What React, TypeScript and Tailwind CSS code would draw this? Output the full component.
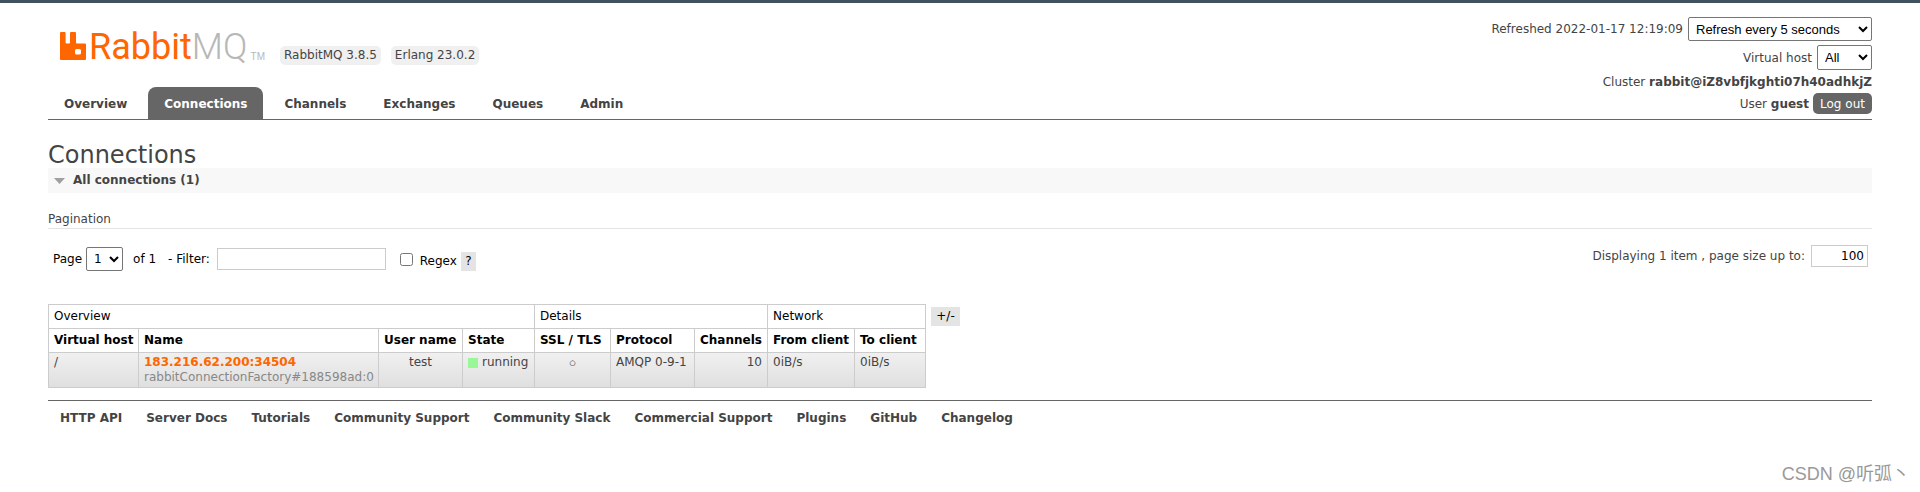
import React, { useState } from 'react';

const tabs = ['Overview', 'Connections', 'Channels', 'Exchanges', 'Queues', 'Admin'];

const footerLinks = [
  'HTTP API',
  'Server Docs',
  'Tutorials',
  'Community Support',
  'Community Slack',
  'Commercial Support',
  'Plugins',
  'GitHub',
  'Changelog',
];

const connections = [
  {
    vhost: '/',
    name: '183.216.62.200:34504',
    client: 'rabbitConnectionFactory#188598ad:0',
    user: 'test',
    state: 'running',
    tls: '○',
    protocol: 'AMQP 0-9-1',
    channels: 10,
    fromClient: '0iB/s',
    toClient: '0iB/s',
  },
];

const cell = 'border border-[#ccc] px-[5px]';

const Logo = () => (
  <a href="#/" aria-label="RabbitMQ" className="flex w-[205px] items-start pt-3">
    <svg width="26" height="28" viewBox="0 0 26 28" fill="#ff6600" className="mr-[3px] shrink-0">
      <path
        fillRule="evenodd"
        d="M1 0h3.600a1 1 0 0 1 1 1v9.500a1 1 0 0 0 1 1h2.400a1 1 0 0 0 1-1V1a1 1 0 0 1 1-1H15a1 1 0 0 1 1 1v9.500a1 1 0 0 0 1 1h8a1 1 0 0 1 1 1V27a1 1 0 0 1-1 1H1a1 1 0 0 1-1-1V1a1 1 0 0 1 1-1zM16.500 17a1.500 1.500 0 0 0-1.500 1.500v2.500a1.500 1.500 0 0 0 1.500 1.500h3a1.500 1.500 0 0 0 1.500-1.500v-2.500a1.500 1.500 0 0 0-1.500-1.500z"
      />
    </svg>
    <span className="font-[Roboto,sans-serif] text-[36px] leading-[30px] text-[#ff6600]">
      Rabbit<span className="font-light text-[#b7b7b7]">MQ</span>
    </span>
    <span className="ml-auto pt-5 font-['Liberation_Sans',sans-serif] text-[10px] leading-[10px] text-[#b7b7b7]">TM</span>
  </a>
);

const Header = () => (
  <header className="flex justify-between border-b border-[#666]">
    <div className="flex flex-col justify-between">
      <div className="flex items-start pl-3 pt-[17px]">
        <Logo />
        <div className="ml-[15px] flex gap-[10px] pt-[26px]">
          <span className="rounded-[5px] bg-[#f0f0f0] px-1 leading-[19px]">RabbitMQ 3.8.5</span>
          <span className="rounded-[5px] bg-[#f0f0f0] px-1 leading-[19px]">Erlang 23.0.2</span>
        </div>
      </div>
      <nav className="flex gap-[5px]">
        {tabs.map(tab => (
          <a
            key={tab}
            href={`#/${tab.toLowerCase()}`}
            className={
              tab === 'Connections'
                ? 'rounded-t-lg bg-[#666] px-4 pb-[7px] pt-[9px] font-bold leading-4 text-white'
                : 'px-4 pb-[7px] pt-[9px] font-bold leading-4'
            }
          >
            {tab}
          </a>
        ))}
      </nav>
    </div>

    <div className="flex flex-col items-end pb-[5px] pt-[14px]">
      <label className="flex items-center gap-[5px]">
        Refreshed 2022-01-17 12:19:09
        <select className="h-6 w-[184px] rounded-[2px] border border-[#767676] bg-white pl-[3px] font-['Liberation_Sans',sans-serif] text-[13px] text-black">
          <option>Refresh every 5 seconds</option>
          <option>Refresh every 30 seconds</option>
          <option>Do not refresh</option>
        </select>
      </label>
      <label className="mt-1 flex items-center gap-[5px]">
        Virtual host
        <select className="h-[25px] w-[55px] rounded-[2px] border border-[#767676] bg-white pl-[3px] font-['Liberation_Sans',sans-serif] text-[13px] text-black">
          <option>All</option>
          <option>/</option>
        </select>
      </label>
      <p className="mt-1 leading-4">
        Cluster <b>rabbit@iZ8vbfjkghti07h40adhkjZ</b>
      </p>
      <div className="mt-[3px] flex items-center gap-1">
        <span>
          User <b>guest</b>
        </span>
        <button className="h-[21px] w-[59px] rounded-[5px] bg-[#666] text-white">Log out</button>
      </div>
    </div>
  </header>
);

const Pagination = () => {
  const [filter, setFilter] = useState('');
  const [regex, setRegex] = useState(false);
  const [pageSize, setPageSize] = useState('100');

  return (
    <div className="flex items-start justify-between pb-[33px] pl-[5px] pr-1 pt-4">
      <div className="flex items-center pt-[2px] text-black">
        <label className="flex items-center gap-1">
          Page
          <select className="h-6 w-[37px] rounded-[2px] border border-[#767676] bg-white pl-[3px]">
            <option>1</option>
          </select>
        </label>
        <span className="ml-[10px]">of 1</span>
        <label className="ml-3 flex items-center gap-[7px]">
          - Filter:
          <input
            type="text"
            value={filter}
            onChange={e => setFilter(e.target.value)}
            className="h-[22px] w-[169px] border border-[#ccc] px-1"
          />
        </label>
        <label className="ml-[14px] flex items-center gap-[7px]">
          <input type="checkbox" checked={regex} onChange={e => setRegex(e.target.checked)} className="size-[13px]" />
          <span className="pt-1">Regex</span>
        </label>
        <button className="ml-1 mt-1 w-[15px] bg-[#e4e4e4] leading-[19px]">?</button>
      </div>
      <label className="flex items-center gap-[6px]">
        Displaying 1 item , page size up to:
        <input
          type="text"
          value={pageSize}
          onChange={e => setPageSize(e.target.value)}
          className="h-[22px] w-[57px] border border-[#ccc] px-[3px] text-right text-black"
        />
      </label>
    </div>
  );
};

const ConnectionsTable = () => (
  <div className="flex items-start gap-[5px]">
    <table className="w-[878px] table-fixed border-collapse text-left">
      <colgroup>
        <col className="w-[90px]" />
        <col className="w-[240px]" />
        <col className="w-[84px]" />
        <col className="w-[72px]" />
        <col className="w-[76px]" />
        <col className="w-[84px]" />
        <col className="w-[73px]" />
        <col className="w-[87px]" />
        <col className="w-[71px]" />
      </colgroup>
      <thead className="whitespace-nowrap leading-[23px] text-black">
        <tr>
          <th colSpan={4} className={`${cell} font-normal`}>Overview</th>
          <th colSpan={3} className={`${cell} font-normal`}>Details</th>
          <th colSpan={2} className={`${cell} font-normal`}>Network</th>
        </tr>
        <tr>
          <th className={cell}>Virtual host</th>
          <th className={cell}>Name</th>
          <th className={cell}>User name</th>
          <th className={cell}>State</th>
          <th className={cell}>SSL / TLS</th>
          <th className={cell}>Protocol</th>
          <th className={cell}>Channels</th>
          <th className={cell}>From client</th>
          <th className={cell}>To client</th>
        </tr>
      </thead>
      <tbody>
        {connections.map(c => (
          <tr key={c.name} className="h-[35px] whitespace-nowrap bg-linear-to-b from-[#f0f0f0] to-[#dfdfdf] align-top leading-[15px]">
            <td className={`${cell} pt-[2px]`}>{c.vhost}</td>
            <td className={`${cell} pt-[2px]`}>
              <a href="#/connections/1" className="block font-bold text-[#ff6600]">{c.name}</a>
              <span className="block text-[#888]">{c.client}</span>
            </td>
            <td className={`${cell} pt-[2px] text-center`}>{c.user}</td>
            <td className={`${cell} pt-[2px]`}>
              <span className="flex items-center gap-1">
                <span className="size-[10px] bg-[#98f898]" />
                {c.state}
              </span>
            </td>
            <td className={`${cell} pt-[3px] text-center text-[7px] font-bold text-black`}>{c.tls}</td>
            <td className={`${cell} pt-[2px]`}>{c.protocol}</td>
            <td className={`${cell} pt-[2px] text-right`}>{c.channels}</td>
            <td className={`${cell} pt-[2px]`}>{c.fromClient}</td>
            <td className={`${cell} pt-[2px]`}>{c.toClient}</td>
          </tr>
        ))}
      </tbody>
    </table>
    <button className="mt-[3px] w-[29px] bg-[#e4e4e4] leading-[19px] text-black">+/-</button>
  </div>
);

const App = () => (
  <div className="relative min-h-screen border-t-3 border-[#40525f] bg-white px-12 font-['DejaVu_Sans',sans-serif] text-[12px] leading-4 text-[#444]">
    <Header />
    <main>
      <h1 className="pt-[22px] text-[24px] leading-[26px]">Connections</h1>
      <h2 className="flex items-center gap-2 bg-[#f8f8f8] pl-[6px] font-bold leading-[25px]">
        <svg width="11" height="6" viewBox="0 0 11 6" fill="#a0a0a0">
          <path d="M0 0h11L5.500 6z" />
        </svg>
        All connections (1)
      </h2>
      <h3 className="mt-[18px] border-b border-[#e4e4e4] pb-px">Pagination</h3>
      <Pagination />
      <ConnectionsTable />
    </main>
    <footer className="mt-3 flex gap-6 border-t border-[#666] px-3 pt-[9px] font-bold">
      {footerLinks.map(link => (
        <a key={link} href="#/">{link}</a>
      ))}
    </footer>
    <span className="absolute bottom-[6px] right-[10px] font-['Liberation_Sans','Noto_Sans_CJK_SC',sans-serif] text-[18px] leading-6 text-[#999]">
      CSDN @听弧丶
    </span>
  </div>
);

export default App;
